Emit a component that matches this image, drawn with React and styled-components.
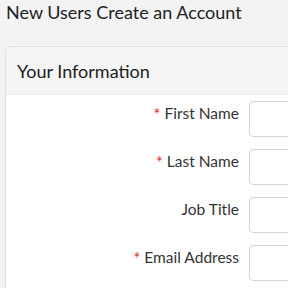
import React from "react";
import styled, { createGlobalStyle } from "styled-components";

const Global = createGlobalStyle`
  html, body { margin: 0; padding: 0; background: #f3f3f3; }
  body { font-family: Lato, "Open Sans", sans-serif; color: #333; overflow: hidden; }
`;

const Page = styled.div`
  width: 288px;
  height: 288px;
  padding: 0 0 0 5px;
  box-sizing: border-box;
  overflow: hidden;
`;

const Title = styled.h1`
  margin: 0;
  padding: 1px 0 0 1px;
  height: 46px;
  box-sizing: border-box;
  font-size: 18px;
  font-weight: 400;
  line-height: 22px;
  color: #222;
  white-space: nowrap;
`;

const Panel = styled.section`
  width: 320px;
  border: 1px solid #e2e2e2;
  border-radius: 4px;
  background: #fff;
  overflow: hidden;
  padding-bottom: 40px;
`;

const PanelHeader = styled.header`
  height: 48px;
  background: #f5f5f5;
  border-bottom: 1px solid #ececec;
  box-sizing: border-box;
  display: flex;
  align-items: center;
  padding: 1px 11px 0;
  font-size: 18px;
  color: #222;
`;

const PanelBody = styled.div`
  padding: 6px 0 0;
  display: flex;
  flex-direction: column;
  gap: 12px;
`;

const Row = styled.div`
  display: grid;
  grid-template-columns: 233px 1fr;
  column-gap: 10px;
  align-items: start;
`;

const Label = styled.label`
  text-align: right;
  font-size: 15.5px;
  line-height: 20px;
  padding-top: 2px;
  color: #333;
  white-space: nowrap;
`;

const Star = styled.span`
  color: #d9363e;
  margin-right: 4px;
  font-size: 17px;
  vertical-align: -2px;
`;

const Input = styled.input`
  height: 36px;
  box-sizing: border-box;
  border: 1px solid #d6d6d6;
  border-radius: 4px;
  width: 100px;
  background: #fff;
`;

const fields = [
  { label: "First Name", required: true },
  { label: "Last Name", required: true },
  { label: "Job Title", required: false },
  { label: "Email Address", required: true },
];

export default function App() {
  return (
    <>
      <Global />
      <Page>
        <Title>New Users Create an Account</Title>
        <Panel>
          <PanelHeader>Your Information</PanelHeader>
          <PanelBody>
            {fields.map((f) => (
              <Row key={f.label}>
                <Label>
                  {f.required && <Star>*</Star>}
                  {f.label}
                </Label>
                <Input type="text" />
              </Row>
            ))}
          </PanelBody>
        </Panel>
      </Page>
    </>
  );
}
